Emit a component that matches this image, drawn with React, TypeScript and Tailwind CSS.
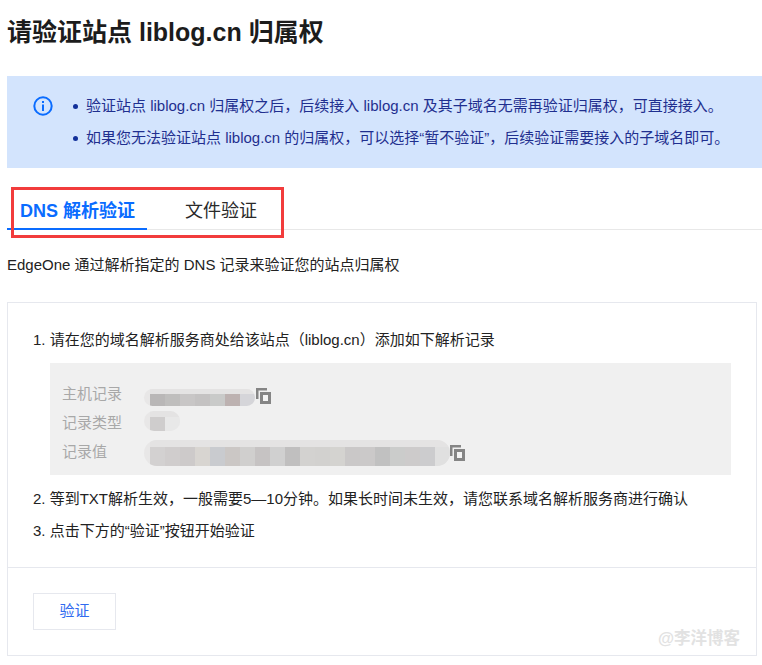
import React from 'react';

const fontStack = "font-['Liberation_Sans','Noto_Sans_CJK_SC',sans-serif]";

const hostCells = ['#b9b7b7', '#bfbebd', '#c8c6c6', '#c4c2c2', '#c9cac9', '#bdb2b1', '#d5d5d9'];
const typeCells = ['#cfcdcd', '#e8e8e8'];
const valueCells = [
  '#d3d1d1', '#d0cdcd', '#cdcaca', '#d8d5d1', '#c9cbcf', '#cbc7c5', '#d0cfce', '#c6c3c3',
  '#d0d0d0', '#c0bfbf', '#d3d2d0', '#d2d1cf', '#d4d3d0', '#cac8c8', '#cbc9c9', '#c1c1c1',
  '#cbcccb', '#cdcbcb', '#ccccce', '#e0e0e0',
];

function CopyIcon() {
  return (
    <svg width="15" height="16" viewBox="0 0 15 16" className="shrink-0">
      <path d="M0 1.25h11M1.25 0v11" stroke="#858585" strokeWidth="2.5" fill="none" />
      <rect x="5.5" y="5.5" width="8" height="9" stroke="#858585" strokeWidth="3" fill="#f4f4f4" />
    </svg>
  );
}

function Mosaic({ cells, size }: { cells: string[]; size: string }) {
  return (
    <div className={`flex ${size} overflow-hidden rounded-full bg-[#e8e7e7] pl-[6px]`}>
      {cells.map((color, i) => (
        <div key={i} className="w-[15px] h-full flex flex-col">
          <div className="h-[30%] bg-[#e4e3e3]" />
          <div className="flex-1" style={{ backgroundColor: color }} />
        </div>
      ))}
    </div>
  );
}

function RecordRow({ label, children }: { label: string; children: React.ReactNode }) {
  return (
    <div className="flex items-center h-[29px]">
      <span className="w-[82px] shrink-0 text-[#a8a8a8]">{label}</span>
      {children}
    </div>
  );
}

export default function App() {
  return (
    <div className={`relative w-[762px] h-[665px] overflow-hidden bg-white pl-[7px] text-[15px] text-[#222222] ${fontStack}`}>
      <h1 className="h-[76px] pt-[15px] text-[25px] leading-[34px] font-bold text-[#1c1c1c]">
        请验证站点 liblog.cn 归属权
      </h1>

      <div className="flex h-[92px] bg-[#d3e4fd] pl-[26px] pt-[18px] text-[#1f2f8f]">
        <svg width="20" height="20" viewBox="0 0 20 20" className="mt-[2px] shrink-0">
          <circle cx="10" cy="10" r="8.7" fill="none" stroke="#0a6cff" strokeWidth="2" />
          <rect x="9" y="8.5" width="2" height="6.5" fill="#0a6cff" />
          <rect x="9" y="5" width="2" height="2" fill="#0a6cff" />
        </svg>
        <ul className="ml-[20px]">
          <li className="flex items-center h-[24px]">
            <span className="mr-[8px] h-[5px] w-[5px] rounded-full bg-[#12309a]" />
            验证站点 liblog.cn 归属权之后，后续接入 liblog.cn 及其子域名无需再验证归属权，可直接接入。
          </li>
          <li className="mt-[8px] flex items-center h-[24px]">
            <span className="mr-[8px] h-[5px] w-[5px] rounded-full bg-[#12309a]" />
            如果您无法验证站点 liblog.cn 的归属权，可以选择“暂不验证”，后续验证需要接入的子域名即可。
          </li>
        </ul>
      </div>

      <div className="mt-[25px] flex h-[37px] border-b border-[#e8e8e8] text-[18px]">
        <div className="w-[140px] h-[37px] border-b-2 border-[#0a6cff] pl-[13px] font-bold leading-[36px] text-[#0a6cff]">
          DNS 解析验证
        </div>
        <div className="ml-[38px] leading-[36px] text-[#2a2a2a]">文件验证</div>
      </div>

      <p className="mt-[25px] leading-[20px]">EdgeOne 通过解析指定的 DNS 记录来验证您的站点归属权</p>

      <div className="mt-[27px] w-[750px] h-[354px] border border-[#e6e8ee]">
        <div className="h-[265px] border-b border-[#e6e8ee] pl-[25px] pt-[27px]">
          <p className="leading-[20px]">1. 请在您的域名解析服务商处给该站点（liblog.cn）添加如下解析记录</p>
          <div className="mt-[13px] ml-[17px] w-[681px] h-[112px] bg-[#f0f0f0] pl-[12px] pt-[17px]">
            <RecordRow label="主机记录">
              <Mosaic cells={hostCells} size="h-[17px] mt-[5px]" />
              <div className="ml-[1px] mt-[3px]">
                <CopyIcon />
              </div>
            </RecordRow>
            <RecordRow label="记录类型">
              <Mosaic cells={typeCells} size="h-[20px] mb-[5px]" />
            </RecordRow>
            <RecordRow label="记录值">
              <Mosaic cells={valueCells} size="h-[26px]" />
              <div className="mt-[1px]">
                <CopyIcon />
              </div>
            </RecordRow>
          </div>
          <p className="mt-[14px] leading-[20px]">2. 等到TXT解析生效，一般需要5—10分钟。如果长时间未生效，请您联系域名解析服务商进行确认</p>
          <p className="mt-[12px] leading-[20px]">3. 点击下方的“验证”按钮开始验证</p>
        </div>
        <div className="pl-[25px] pt-[25px]">
          <button className="w-[83px] h-[37px] border border-[#e6e8ee] bg-white text-[#2f6bf0]">验证</button>
        </div>
      </div>

      <div className="absolute left-[11px] top-[187px] w-[273px] h-[51px] border-[3px] border-[#f23c3c]" />
      <div className="absolute left-[658px] top-[628px] text-[16.5px] font-bold leading-[20px] text-[#e2e2e2]">@李洋博客</div>
    </div>
  );
}
